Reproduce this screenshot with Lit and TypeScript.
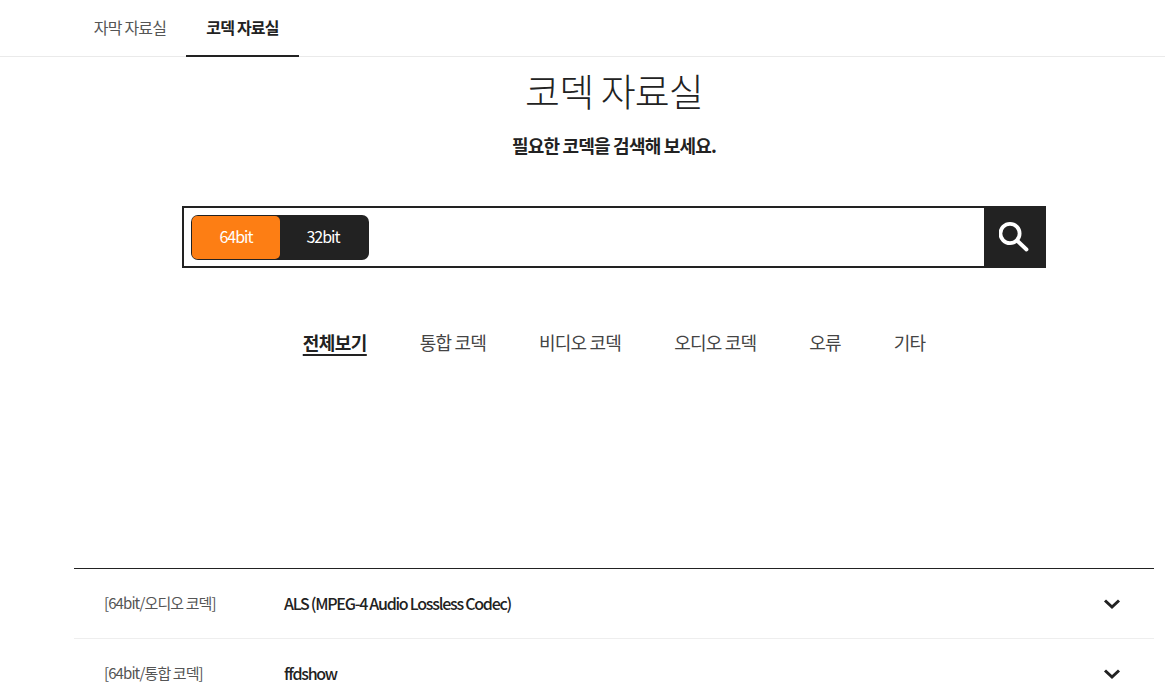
import { LitElement, html, css } from "lit";
import { customElement } from "lit/decorators.js";

@customElement("app-root")
export class AppRoot extends LitElement {
  static styles = css`
    :host {
      display: block;
      height: 689px;
      overflow: hidden;
      background: #fff;
      color: #222;
      font-family: "Noto Sans CJK KR", "Noto Sans", sans-serif;
    }
    .tabbar {
      height: 56px;
      border-bottom: 1px solid #eaeaea;
      padding-left: 74px;
      display: flex;
    }
    .tab {
      height: 56px;
      box-sizing: border-box;
      padding: 0 0 2px;
      width: 112px;
      display: flex;
      align-items: center;
      justify-content: center;
      font-size: 16px;
      letter-spacing: -0.8px;
      color: #555;
      white-space: nowrap;
    }
    .tab.active {
      font-weight: 700;
      color: #222;
      border-bottom: 2px solid #222;
      height: 57px;
      padding-bottom: 1px;
      width: 113px;
    }
    .main {
      width: 1080px;
      margin-left: 74px;
      display: flex;
      flex-direction: column;
      align-items: center;
    }
    h1 {
      margin: 7px 0 0;
      height: 52px;
      font-size: 38px;
      line-height: 52px;
      font-weight: 300;
      letter-spacing: -0.9px;
      color: #222;
    }
    .sub {
      margin: 16px 0 0;
      height: 26px;
      line-height: 26px;
      font-size: 18px;
      font-weight: 700;
      letter-spacing: -0.8px;
    }
    .search {
      margin-top: 48px;
      width: 864px;
      height: 62px;
      box-sizing: border-box;
      border: 2px solid #222;
      display: flex;
      align-items: center;
      padding-left: 7px;
    }
    .toggle {
      width: 178px;
      height: 45px;
      box-sizing: border-box;
      background: #222;
      border-radius: 7px;
      padding: 1px;
      display: flex;
    }
    .opt {
      width: 88px;
      box-sizing: border-box;
      padding: 0 2px 2px 0;
      display: flex;
      align-items: center;
      justify-content: center;
      font-size: 16px;
      letter-spacing: -1px;
      color: #fff;
    }
    .opt.on {
      padding-right: 0;
      background: #fd7e14;
      border-radius: 5px;
      color: #fff;
    }
    .spacer { flex: 1; }
    .btn {
      width: 62px;
      height: 62px;
      margin-right: -2px;
      background: #222;
      display: flex;
      align-items: center;
      justify-content: center;
    }
    .btn svg { margin-left: -2px; }
    .cats {
      margin-top: 60px;
      display: flex;
      gap: 53px;
      height: 30px;
      font-size: 18px;
      letter-spacing: -0.8px;
      color: #444;
      line-height: 28px;
    }
    .cat { white-space: nowrap; }
    .cat.active {
      font-weight: 700;
      letter-spacing: -0.55px;
      color: #222;
      text-decoration: underline;
      text-decoration-thickness: 2px;
      text-underline-offset: 4px;
    }
    .list {
      margin-top: 210px;
      width: 100%;
      border-top: 1px solid #222;
    }
    .row {
      height: 70px;
      box-sizing: border-box;
      border-bottom: 1px solid #eee;
      display: flex;
      align-items: center;
      padding: 0 33px 0 30px;
    }
    .kind {
      width: 180px;
      font-size: 15px;
      letter-spacing: -0.9px;
      color: #555;
      white-space: nowrap;
      padding-bottom: 2px;
    }
    .name {
      flex: 1;
      font-size: 16px;
      font-weight: 500;
      letter-spacing: -1.25px;
      color: #222;
      padding-bottom: 2px;
    }
    .chev { display: block; }
  `;

  private chevron() {
    return html`<svg class="chev" width="18" height="12" viewBox="0 0 18 12" fill="none">
      <path d="M2 2.5 L9 9 L16 2.5" stroke="#222" stroke-width="3" />
    </svg>`;
  }

  render() {
    const cats = ["통합 코덱", "비디오 코덱", "오디오 코덱", "오류", "기타"];
    const rows = [
      ["[64bit/오디오 코덱]", "ALS (MPEG-4 Audio Lossless Codec)"],
      ["[64bit/통합 코덱]", "ffdshow"],
    ];
    return html`
      <nav class="tabbar">
        <div class="tab">자막 자료실</div>
        <div class="tab active">코덱 자료실</div>
      </nav>
      <main class="main">
        <h1>코덱 자료실</h1>
        <p class="sub">필요한 코덱을 검색해 보세요.</p>
        <div class="search">
          <div class="toggle">
            <div class="opt on">64bit</div>
            <div class="opt">32bit</div>
          </div>
          <div class="spacer"></div>
          <div class="btn">
            <svg width="30" height="30" viewBox="0 0 30 30" fill="none">
              <circle cx="11" cy="11.5" r="9.6" stroke="#fff" stroke-width="3.8" />
              <path d="M18 18.5 L27.5 27.5" stroke="#fff" stroke-width="3.8" stroke-linecap="round" />
            </svg>
          </div>
        </div>
        <div class="cats">
          <span class="cat active">전체보기</span>
          ${cats.map((c) => html`<span class="cat">${c}</span>`)}
        </div>
        <div class="list">
          ${rows.map(
            ([k, n]) => html`<div class="row">
              <div class="kind">${k}</div>
              <div class="name">${n}</div>
              ${this.chevron()}
            </div>`
          )}
        </div>
      </main>
    `;
  }
}
